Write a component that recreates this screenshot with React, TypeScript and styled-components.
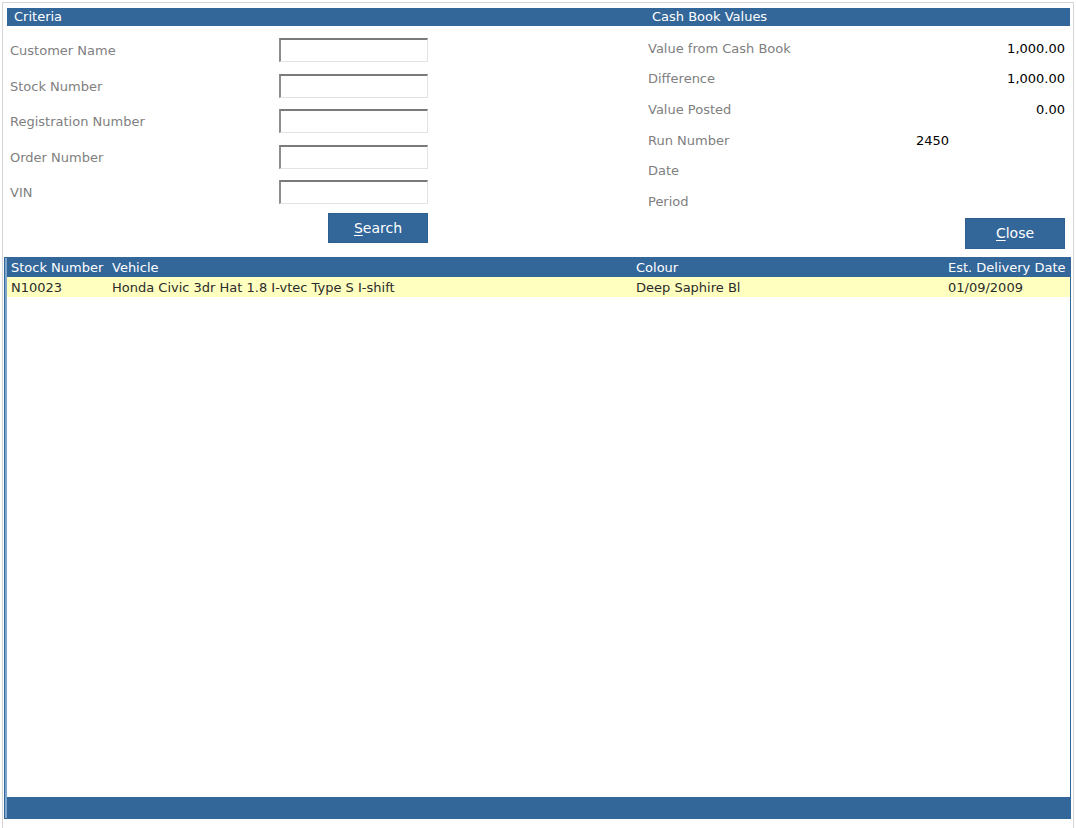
import React from "react";
import styled, { createGlobalStyle } from "styled-components";

const Global = createGlobalStyle`
  html, body { margin: 0; padding: 0; background: #ffffff; }
  body { font-family: "DejaVu Sans", Verdana, sans-serif; font-size: 13px; overflow: hidden; }
`;

const BLUE = "#336699";

const Frame = styled.div`
  margin: 2px 0 0 2px;
  width: 1072px;
  height: 840px;
  box-sizing: border-box;
  border: 1px solid #d4d4d4;
  padding: 5px 3px 0 4px;
  display: flex;
  flex-direction: column;
`;

const Top = styled.div`
  display: grid;
  grid-template-columns: 638px 1fr;
`;

const Section = styled.section`
  display: flex;
  flex-direction: column;
`;

const SectionHeader = styled.div`
  height: 18px;
  line-height: 18px;
  background: ${BLUE};
  color: #ffffff;
  padding-left: 7px;
  white-space: nowrap;
`;

const CriteriaForm = styled.div`
  display: grid;
  grid-template-columns: 269px 149px;
  grid-auto-rows: 35.5px;
  padding: 12px 0 0 3px;
  align-items: start;
`;

const Label = styled.span`
  color: #808080;
  line-height: 25px;
  white-space: nowrap;
`;

const TextBox = styled.input`
  box-sizing: border-box;
  width: 149px;
  height: 24px;
  margin: 0;
  padding: 0 3px;
  border-style: solid;
  border-width: 2px 1px 1px 2px;
  border-color: #7a7a7a #e3e3e3 #e3e3e3 #8c8c8c;
  background: #ffffff;
  outline: none;
  font: inherit;
`;

const ButtonRow = styled.div<{ $pad: number; $top: number }>`
  display: flex;
  justify-content: flex-end;
  padding-right: ${(p) => p.$pad}px;
  margin-top: ${(p) => p.$top}px;
`;

const ActionButton = styled.button<{ $h: number }>`
  width: 100px;
  height: ${(p) => p.$h}px;
  border: 1px solid #2d5f8f;
  background: ${BLUE};
  color: #ffffff;
  font: inherit;
  font-size: 14px;
  padding: 0;
  cursor: pointer;
  u { text-decoration: underline; text-underline-offset: 2px; }
`;

const ValuesGrid = styled.div`
  display: grid;
  grid-template-columns: 268px 1fr;
  grid-auto-rows: 30.6px;
  padding: 7px 5px 0 3px;
  align-items: center;
`;

const Value = styled.span<{ $align: "left" | "right" }>`
  color: #000000;
  text-align: ${(p) => p.$align};
  white-space: nowrap;
`;

const Table = styled.div`
  margin: 8px -1px 0 -3px;
  height: 562px;
  box-sizing: border-box;
  border: 1px solid ${BLUE};
  box-shadow: inset 2px 0 0 #7fa6cc;
  padding-left: 2px;
  display: flex;
  flex-direction: column;
  background: #ffffff;
`;

const COLS = "101px 524px 312px 1fr";

const HeadRow = styled.div`
  display: grid;
  grid-template-columns: ${COLS};
  height: 19px;
  line-height: 19px;
  background: ${BLUE};
  color: #ffffff;
`;

const DataRow = styled.div`
  display: grid;
  grid-template-columns: ${COLS};
  height: 20px;
  line-height: 21px;
  background: #ffffc0;
  color: #2b2b2b;
`;

const Cell = styled.span`
  padding-left: 4px;
  white-space: nowrap;
  overflow: hidden;
`;

const TableBody = styled.div`
  flex: 1;
`;

const TableFooter = styled.div`
  height: 21px;
  background: ${BLUE};
`;

const criteria = [
  "Customer Name",
  "Stock Number",
  "Registration Number",
  "Order Number",
  "VIN",
];

const values: { label: string; value: string; align: "left" | "right" }[] = [
  { label: "Value from Cash Book", value: "1,000.00", align: "right" },
  { label: "Difference", value: "1,000.00", align: "right" },
  { label: "Value Posted", value: "0.00", align: "right" },
  { label: "Run Number", value: "2450", align: "left" },
  { label: "Date", value: "", align: "left" },
  { label: "Period", value: "", align: "left" },
];

const rows = [
  {
    stock: "N10023",
    vehicle: "Honda Civic 3dr Hat 1.8 I-vtec Type S I-shift",
    colour: "Deep Saphire Bl",
    date: "01/09/2009",
  },
];

export default function App() {
  return (
    <>
      <Global />
      <Frame>
        <Top>
          <Section>
            <SectionHeader>Criteria</SectionHeader>
            <CriteriaForm>
              {criteria.map((c) => (
                <React.Fragment key={c}>
                  <Label>{c}</Label>
                  <TextBox type="text" />
                </React.Fragment>
              ))}
            </CriteriaForm>
            <ButtonRow $pad={217} $top={-3}>
              <ActionButton $h={30}>
                <u>S</u>earch
              </ActionButton>
            </ButtonRow>
          </Section>
          <Section>
            <SectionHeader>Cash Book Values</SectionHeader>
            <ValuesGrid>
              {values.map((v) => (
                <React.Fragment key={v.label}>
                  <Label>{v.label}</Label>
                  <Value $align={v.align}>{v.value}</Value>
                </React.Fragment>
              ))}
            </ValuesGrid>
            <ButtonRow $pad={5} $top={1}>
              <ActionButton $h={31}>
                <u>C</u>lose
              </ActionButton>
            </ButtonRow>
          </Section>
        </Top>
        <Table>
          <HeadRow>
            <Cell>Stock Number</Cell>
            <Cell>Vehicle</Cell>
            <Cell>Colour</Cell>
            <Cell>Est. Delivery Date</Cell>
          </HeadRow>
          <TableBody>
            {rows.map((r) => (
              <DataRow key={r.stock}>
                <Cell>{r.stock}</Cell>
                <Cell>{r.vehicle}</Cell>
                <Cell>{r.colour}</Cell>
                <Cell>{r.date}</Cell>
              </DataRow>
            ))}
          </TableBody>
          <TableFooter />
        </Table>
      </Frame>
    </>
  );
}
